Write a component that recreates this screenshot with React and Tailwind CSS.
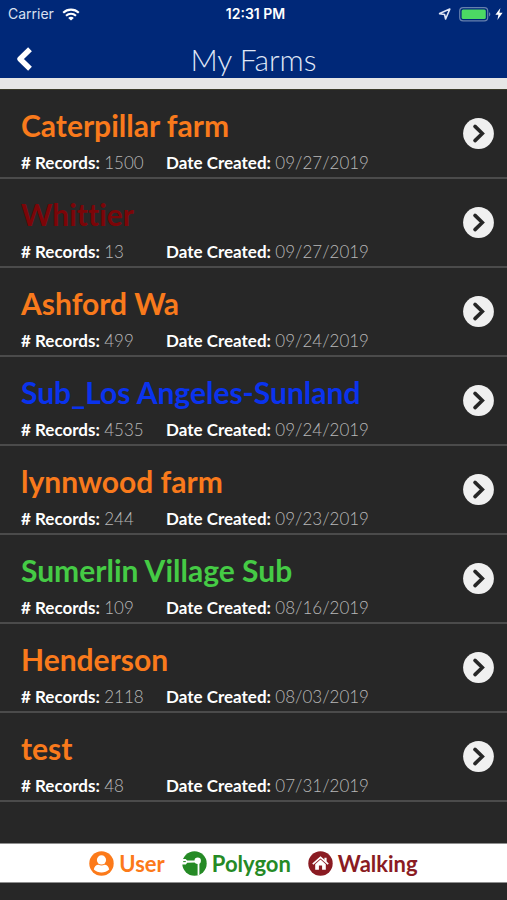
import React from "react";

const farms = [
  { id: 1, name: "Caterpillar farm", records: 1500, created: "09/27/2019", color: "text-[#f97a1c]" },
  { id: 2, name: "Whittier", records: 13, created: "09/27/2019", color: "text-[#7c0508]" },
  { id: 3, name: "Ashford Wa", records: 499, created: "09/24/2019", color: "text-[#f97a1c]" },
  { id: 4, name: "Sub_Los Angeles-Sunland", records: 4535, created: "09/24/2019", color: "text-[#0a33ee]" },
  { id: 5, name: "lynnwood farm", records: 244, created: "09/23/2019", color: "text-[#f97a1c]" },
  { id: 6, name: "Sumerlin Village Sub", records: 109, created: "08/16/2019", color: "text-[#45cb45]" },
  { id: 7, name: "Henderson", records: 2118, created: "08/03/2019", color: "text-[#f97a1c]" },
  { id: 8, name: "test", records: 48, created: "07/31/2019", color: "text-[#f97a1c]" },
];

const WifiIcon = () => (
  <svg width="18" height="13" viewBox="0 0 18 13" fill="none" stroke="#fff" strokeWidth="2.1">
    <path d="M1.2 4.8C5.6 .6 12.4 .6 16.8 4.8" />
    <path d="M4 7.8c2.9-2.6 7.1-2.6 10 0" />
    <path d="M9 12.6 6.2 9.9c1.6-1.4 4-1.4 5.6 0z" fill="#fff" stroke="none" />
  </svg>
);

const LocationIcon = () => (
  <svg width="13" height="13" viewBox="0 0 13 13" fill="none" stroke="#dfe5f5" strokeWidth="1.6" strokeLinejoin="round">
    <path d="M11.8 1.1 7.6 11 6.6 6.5 1.6 5.6z" />
  </svg>
);

const BatteryIcon = () => (
  <svg width="32" height="15" viewBox="0 0 32 15">
    <rect x=".7" y=".7" width="28" height="13.2" rx="3.4" fill="none" stroke="#6680ae" strokeWidth="1.2" />
    <rect x="2.6" y="2.6" width="24.2" height="9.4" rx="1.5" fill="#4cd964" />
    <path d="M30 5.2c1.8.6 1.8 3.6 0 4.2z" fill="#6680ae" />
  </svg>
);

const BoltIcon = () => (
  <svg width="8" height="12" viewBox="0 0 8 12" fill="#fff">
    <path d="M5.4 0 .4 6.8h3L2.4 12l5.2-7.2H4.4z" />
  </svg>
);

const BackIcon = () => (
  <svg width="17" height="24" viewBox="0 0 17 24" fill="none" stroke="#fff" strokeWidth="5.4" strokeLinejoin="round">
    <path d="M14 2.2 4 12l10 9.8" />
  </svg>
);

const ArrowIcon = () => (
  <svg width="31" height="31" viewBox="0 0 31 31">
    <circle cx="15.5" cy="15.5" r="15.4" fill="#f0f0f0" />
    <path d="m12 8.4 7.3 7.1-7.3 7.1" fill="none" stroke="#262626" strokeWidth="3.6" strokeLinecap="round" />
  </svg>
);

const UserIcon = () => (
  <svg width="25" height="25" viewBox="0 0 25 25">
    <circle cx="12.5" cy="12.5" r="12.2" fill="#fc7a1a" />
    <circle cx="12.5" cy="8.9" r="4.6" fill="#fff" />
    <path d="M4.8 18.6c.5-3.4 2.3-4.7 4.7-4.9 1.8 1 4.2 1 6 0 2.4.2 4.2 1.5 4.7 4.9-4.2 4-11.2 4-15.4 0z" fill="#fff" />
  </svg>
);

const PolygonIcon = () => (
  <svg width="25" height="25" viewBox="0 0 25 25">
    <circle cx="12.5" cy="12.5" r="12.2" fill="#258a25" />
    <path d="M0 8h3.6l1.6 1.5 8 .1v1.8l-8 .4-1.4 1.7H0z" fill="#fff" />
    <path d="M1.2 10.6h2.6" stroke="#258a25" strokeWidth="1" />
    <circle cx="15.7" cy="9.8" r="3.2" fill="#fff" />
    <path d="M15.6 12h1.8v12l-1.8.4z" fill="#fff" />
  </svg>
);

const HomeIcon = () => (
  <svg width="25" height="25" viewBox="0 0 25 25">
    <circle cx="12.5" cy="12.5" r="12.2" fill="#8a1b22" />
    <path d="m4.8 13.1 7.7-6.7 7.7 6.7" fill="none" stroke="#fff" strokeWidth="1.7" />
    <path d="M16.4 6.8h2.2v4.4l-2.2-2z" fill="#fff" />
    <path d="m7.2 13.2 5.3-4.6 5.3 4.6v5.6h-3.7v-4.2h-3.2v4.2H7.2z" fill="#fff" />
  </svg>
);

const FarmRow = ({ farm }) => (
  <li className="flex h-[89px] items-center justify-between border-b-2 border-[#4b4b4b] pl-[21px] pr-[13px]">
    <div className="pt-[14px]">
      <h2 className={`text-[30px] leading-9 font-bold [font-variant-ligatures:none] ${farm.color}`}>{farm.name}</h2>
      <div className="mt-2 flex text-[17px] leading-6">
        <p className="w-[145px]">
          <span className="font-bold text-white"># Records:</span>{" "}
          <span className="font-light text-[#b8b8b8]">{farm.records}</span>
        </p>
        <p>
          <span className="font-bold text-white">Date Created:</span>{" "}
          <span className="font-light text-[#b8b8b8]">{farm.created}</span>
        </p>
      </div>
    </div>
    <button type="button" aria-label={`Open ${farm.name}`}>
      <ArrowIcon />
    </button>
  </li>
);

const App = () => {
  return (
    <div className="flex min-h-screen flex-col bg-[#272727] font-['Lato',sans-serif]">
      {/* Status bar + title */}
      <header className="border-b-[11px] border-[#e6e6e6] bg-[#002878]">
        <div className="grid h-7 grid-cols-3 items-center pl-2 pr-1 font-['Inter',sans-serif] text-sm text-white">
          <div className="flex items-center gap-2 text-[#d9e0f0]">
            Carrier
            <WifiIcon />
          </div>
          <div className="text-center font-semibold">12:31 PM</div>
          <div className="flex items-center justify-end gap-1">
            <LocationIcon />
            <span className="ml-1">
              <BatteryIcon />
            </span>
            <BoltIcon />
          </div>
        </div>
        <div className="grid h-[50px] grid-cols-[1fr_auto_1fr] items-center px-4 pt-3">
          <button type="button" aria-label="Back" className="justify-self-start">
            <BackIcon />
          </button>
          <h1 className="pb-px text-[30px] leading-9 font-light text-[#dfe5f5]">My Farms</h1>
        </div>
      </header>

      {/* Farm list */}
      <ul className="flex-1 border-t border-[#3a3a2a]">
        {farms.map((farm) => (
          <FarmRow key={farm.id} farm={farm} />
        ))}
      </ul>

      {/* Legend */}
      <footer className="mb-[17px] flex h-10 items-center justify-center gap-[17px] border-y border-[#8f8f8f] bg-white text-[22px] font-bold">
        <div className="flex items-center gap-[5px] text-[#fc7a1a]">
          <UserIcon />
          User
        </div>
        <div className="flex items-center gap-[5px] text-[#258a25]">
          <PolygonIcon />
          Polygon
        </div>
        <div className="flex items-center gap-[5px] text-[#8a1b22]">
          <HomeIcon />
          Walking
        </div>
      </footer>
    </div>
  );
};

export default App;
